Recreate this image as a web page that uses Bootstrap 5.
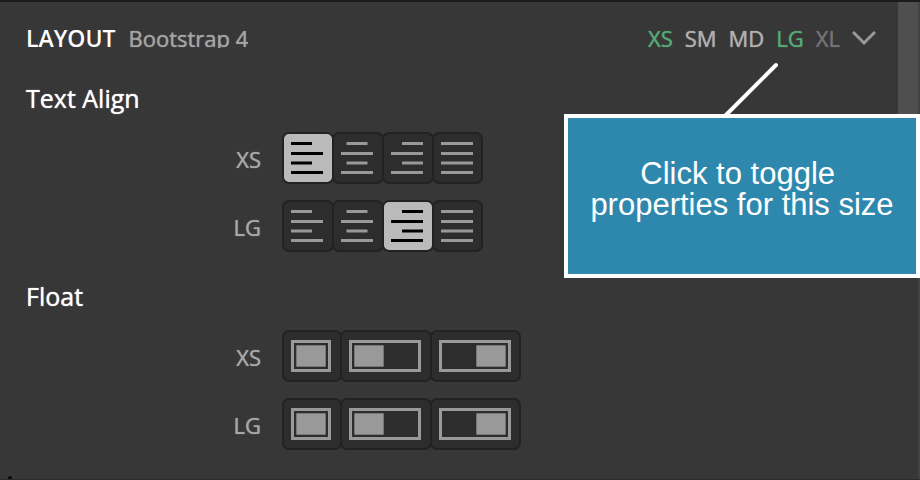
<!DOCTYPE html>
<html lang="en">
<head>
<meta charset="utf-8">
<meta name="viewport" content="width=device-width, initial-scale=1">
<title>Layout</title>
<link href="https://cdn.jsdelivr.net/npm/bootstrap@5.3.0/dist/css/bootstrap.min.css" rel="stylesheet">
<style>
  body { background: #373737; color: #fff; font-family: "Open Sans", "Noto Sans", sans-serif; }
  .panel { border-top: 2px solid #1c1c1c; border-bottom: 1px solid #302a2e; }
  .panel-main { padding: 20px 22px 28px 26px; }
  .panel-head { height: 32px; gap: 13px; }
  .panel-title { font-size: 23px; line-height: 32px; font-weight: 600; }
  .panel-note { font-size: 22px; line-height: 32px; height: 26px; color: #a5a5a5; }
  .panel-note, .size, .group-title, .row-label { text-shadow: 0 0 1px currentColor; }
  .sizes { gap: 12px; }
  .size { font-size: 22px; line-height: 32px; color: #b0b0b0; }
  .size.on { color: #56ab72; }
  .size.off { color: #747474; }
  .group-title { font-size: 25px; line-height: 36px; font-weight: 400; margin: 26px 0 16px; }
  .rows { gap: 16px; }
  .row-label { width: 235px; padding-top: 2px; font-size: 22px; line-height: 32px; color: #a8a8a8; }
  .choices { margin-left: 21px; }
  .choice { border: 2px solid #222; border-radius: 7px; background: #2d2d2d; color: #999; padding: 8px 9px 8px 7px; }
  .choice + .choice { margin-left: -2px; }
  .choice:last-child { padding-right: 8px; }
  .choice.on { background: #bababa; color: #000; }
  .choice svg { display: block; }
  .scroll-track { width: 22px; border-right: 2px solid #424242; }
  .scroll-thumb { height: 180px; background: #4f4f4f; }
  .callout-box { top: 112px; right: 0; width: 356px; height: 164px; padding: 40px 8px; border: 4px solid #fff; background: #2e88ad;
    font-family: "Liberation Sans", Arial, sans-serif; font-size: 31px; line-height: 31px; }
  .callout-line { top: 58px; right: 140px; }
  .speck { left: 8px; bottom: 0; width: 4px; height: 3px; background: #0c0c0c; }
</style>
<script src="https://cdn.jsdelivr.net/npm/bootstrap@5.3.0/dist/js/bootstrap.bundle.min.js"></script>
</head>
<body>
<svg class="d-none" aria-hidden="true">
  <symbol id="al-left" viewBox="0 0 32 32"><path fill="currentColor" d="M0 0h21v3H0zM0 10h32v3H0zM0 19.500h21v3H0zM0 29h32v3H0z"/></symbol>
  <symbol id="al-center" viewBox="0 0 32 32"><path fill="currentColor" d="M5.500 0h21v3h-21zM0 10h32v3H0zM5.500 19.500h21v3h-21zM0 29h32v3H0z"/></symbol>
  <symbol id="al-right" viewBox="0 0 32 32"><path fill="currentColor" d="M11 0h21v3H11zM0 10h32v3H0zM11 19.500h21v3H11zM0 29h32v3H0z"/></symbol>
  <symbol id="al-justify" viewBox="0 0 32 32"><path fill="currentColor" d="M0 0h32v3H0zM0 10h32v3H0zM0 19.500h32v3H0zM0 29h32v3H0z"/></symbol>
  <symbol id="fl-none" viewBox="0 0 40 32"><path fill="none" stroke="currentColor" stroke-width="3" d="M1.500 1.500h37v29h-37z"/><path fill="currentColor" d="M5.300 5.300h29.400v21.400H5.300z"/></symbol>
  <symbol id="fl-left" viewBox="0 0 72 32"><path fill="none" stroke="currentColor" stroke-width="3" d="M1.500 1.500h69v29h-69z"/><path fill="currentColor" d="M5.300 5.300h29.400v21.400H5.300z"/></symbol>
  <symbol id="fl-right" viewBox="0 0 72 32"><path fill="none" stroke="currentColor" stroke-width="3" d="M1.500 1.500h69v29h-69z"/><path fill="currentColor" d="M37.300 5.300h29.400v21.400H37.300z"/></symbol>
</svg>

<div class="panel position-relative d-flex min-vh-100">
  <main class="panel-main flex-grow-1">
    <header class="panel-head d-flex align-items-start">
      <h1 class="panel-title m-0">LAYOUT</h1>
      <span class="panel-note overflow-hidden">Bootstrap 4</span>
      <div class="sizes d-flex align-items-center ms-auto">
        <button type="button" class="size on btn border-0 p-0" aria-pressed="true">XS</button>
        <button type="button" class="size btn border-0 p-0">SM</button>
        <button type="button" class="size btn border-0 p-0">MD</button>
        <button type="button" class="size on btn border-0 p-0" aria-pressed="true">LG</button>
        <button type="button" class="size off btn border-0 p-0">XL</button>
        <button type="button" class="btn border-0 p-0 d-flex" aria-label="Collapse">
          <svg width="24" height="16" viewBox="0 0 24 16" fill="none" stroke="#999" stroke-width="3"><path d="M1 2l11 11L23 2"/></svg>
        </button>
      </div>
    </header>

    <h2 class="group-title">Text Align</h2>
    <div class="rows d-flex flex-column">
      <div class="d-flex align-items-center" role="group" aria-labelledby="ta-xs">
        <span class="row-label text-end" id="ta-xs">XS</span>
        <div class="choices d-flex">
          <button type="button" class="choice on" aria-label="Left" aria-pressed="true"><svg width="32" height="32"><use href="#al-left"/></svg></button>
          <button type="button" class="choice" aria-label="Center"><svg width="32" height="32"><use href="#al-center"/></svg></button>
          <button type="button" class="choice" aria-label="Right"><svg width="32" height="32"><use href="#al-right"/></svg></button>
          <button type="button" class="choice" aria-label="Justify"><svg width="32" height="32"><use href="#al-justify"/></svg></button>
        </div>
      </div>
      <div class="d-flex align-items-center" role="group" aria-labelledby="ta-lg">
        <span class="row-label text-end" id="ta-lg">LG</span>
        <div class="choices d-flex">
          <button type="button" class="choice" aria-label="Left"><svg width="32" height="32"><use href="#al-left"/></svg></button>
          <button type="button" class="choice" aria-label="Center"><svg width="32" height="32"><use href="#al-center"/></svg></button>
          <button type="button" class="choice on" aria-label="Right" aria-pressed="true"><svg width="32" height="32"><use href="#al-right"/></svg></button>
          <button type="button" class="choice" aria-label="Justify"><svg width="32" height="32"><use href="#al-justify"/></svg></button>
        </div>
      </div>
    </div>

    <h2 class="group-title">Float</h2>
    <div class="rows d-flex flex-column">
      <div class="d-flex align-items-center" role="group" aria-labelledby="fl-xs">
        <span class="row-label text-end" id="fl-xs">XS</span>
        <div class="choices d-flex">
          <button type="button" class="choice" aria-label="None"><svg width="40" height="32"><use href="#fl-none"/></svg></button>
          <button type="button" class="choice" aria-label="Left"><svg width="72" height="32"><use href="#fl-left"/></svg></button>
          <button type="button" class="choice" aria-label="Right"><svg width="72" height="32"><use href="#fl-right"/></svg></button>
        </div>
      </div>
      <div class="d-flex align-items-center" role="group" aria-labelledby="fl-lg">
        <span class="row-label text-end" id="fl-lg">LG</span>
        <div class="choices d-flex">
          <button type="button" class="choice" aria-label="None"><svg width="40" height="32"><use href="#fl-none"/></svg></button>
          <button type="button" class="choice" aria-label="Left"><svg width="72" height="32"><use href="#fl-left"/></svg></button>
          <button type="button" class="choice" aria-label="Right"><svg width="72" height="32"><use href="#fl-right"/></svg></button>
        </div>
      </div>
    </div>
  </main>
  <div class="scroll-track flex-shrink-0"><div class="scroll-thumb"></div></div>

  <svg class="callout-line position-absolute" width="60" height="58" viewBox="0 0 60 58" aria-hidden="true"><path d="M56 5L4 57" stroke="#fff" stroke-width="4" stroke-linecap="round"/></svg>
  <div class="callout-box position-absolute text-center" role="note">Click to toggle&nbsp;<br>properties for this size</div>
  <span class="speck position-absolute rounded-top"></span>
</div>
</body>
</html>
